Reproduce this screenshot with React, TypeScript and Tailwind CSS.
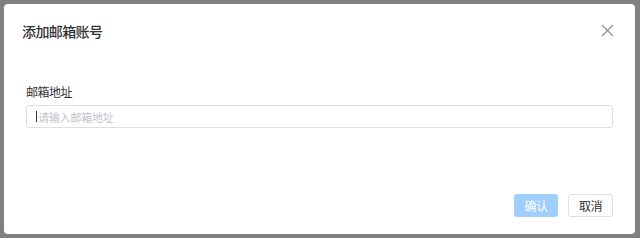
import React from "react";

export default function App() {
  const font = { fontFamily: '"Microsoft YaHei", "Noto Sans CJK SC", "Noto Sans", sans-serif' };
  return (
    <div className="w-[640px] h-[238px] bg-[#808080] p-[4px] pr-[5px]" style={font}>
      <div className="h-full bg-white rounded-[4px] flex flex-col px-[18px] pt-[16px] pb-[17px]">
        <div className="flex items-center justify-between h-[22px]">
          <span className="text-[14px] leading-[22px] text-[#303133] tracking-[-0.6px] font-medium">添加邮箱账号</span>
          <svg width="13" height="13" viewBox="0 0 13 13" className="mr-[3px] mt-[-2px]">
            <path d="M1 1 L12 12 M12 1 L1 12" stroke="#909399" strokeWidth="1.3" fill="none" />
          </svg>
        </div>
        <div className="mx-[4px] mt-[42px] text-[12px] leading-[16px] text-[#303133] tracking-[-0.5px]">邮箱地址</div>
        <div className="mx-[4px] mt-[5px] h-[23px] border border-[#dcdfe6] rounded-[3px] flex items-center pl-[9px]">
          <span className="w-px h-[11px] bg-[#333] mr-[1px]" />
          <span className="text-[11px] leading-[14px] text-[#c0c4cc] tracking-[-0.2px]">请输入邮箱地址</span>
        </div>
        <div className="flex-1" />
        <div className="mx-[4px] flex justify-end gap-[10px]">
          <div className="w-[44px] h-[23px] rounded-[3px] bg-[#a0cfff] text-white text-[12px] flex items-center justify-center tracking-[-0.5px]">确认</div>
          <div className="w-[45px] h-[23px] rounded-[3px] border border-[#dcdfe6] bg-white text-[#303133] text-[12px] flex items-center justify-center tracking-[-0.5px]">取消</div>
        </div>
      </div>
    </div>
  );
}
